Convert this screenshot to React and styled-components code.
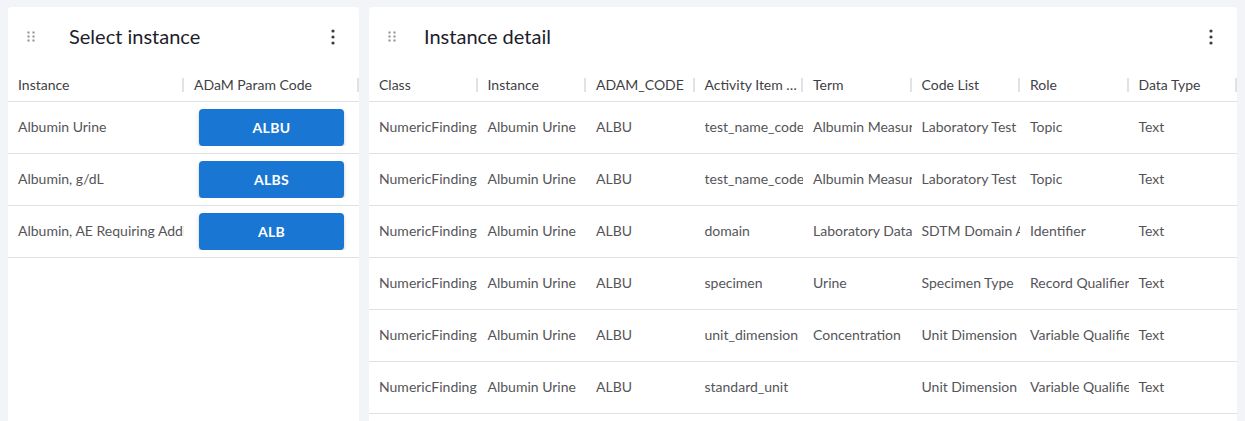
import styled, { createGlobalStyle } from 'styled-components';

const GlobalStyle = createGlobalStyle`
	html, body {
		margin: 0;
		padding: 0;
		background: #f3f4f8;
		font-family: 'Lato', 'Noto Sans', sans-serif;
	}
	* {
		box-sizing: border-box;
	}
`;

const Page = styled.div`
	display: flex;
	gap: 10px;
	padding: 7px 8px 0 8px;
	height: 421px;
	overflow: hidden;
`;

const Card = styled.div`
	flex: ${({ $width }) => ($width ? `0 0 ${$width}px` : '1')};
	display: flex;
	flex-direction: column;
	background: #ffffff;
	border-radius: 4px 4px 0 0;
	min-height: 430px;
`;

const CardHeader = styled.div`
	display: flex;
	align-items: center;
	height: 59px;
	padding: 0 18px 0 19px;
`;

const Handle = styled.div`
	display: flex;
	width: ${({ $gap }) => $gap}px;
	flex-shrink: 0;
`;

const Title = styled.h2`
	flex: 1;
	margin: 0;
	font-size: 20px;
	font-weight: 400;
	color: #1d1d2b;
	padding-bottom: 2px;
`;

const MenuButton = styled.button`
	display: flex;
	align-items: center;
	justify-content: center;
	width: 16px;
	height: 24px;
	padding: 0;
	border: none;
	background: none;
	cursor: pointer;
`;

const Grid = styled.div`
	display: grid;
	grid-template-columns: ${({ $columns }) => $columns};
	border-bottom: 1px solid #e2e2e2;
	height: ${({ $height }) => $height}px;
	padding-top: ${({ $top }) => $top || 0}px;
	align-items: center;
`;

const HeadCell = styled.div`
	position: relative;
	padding: 0 5px 1px 10px;
	font-size: 14px;
	color: #3f3f46;
	white-space: nowrap;
	overflow: hidden;
	text-overflow: ellipsis;

	&::after {
		content: '';
		position: absolute;
		right: 0;
		top: 50%;
		width: 2px;
		height: 14px;
		margin-top: -7px;
		background: #e2e2e2;
	}
`;

const Cell = styled.div`
	display: flex;
	justify-content: ${({ $center }) => ($center ? 'center' : 'flex-start')};
	padding-left: ${({ $center }) => ($center ? '0' : '10px')};
	padding-bottom: ${({ $center }) => ($center ? '0' : '3px')};
	font-size: 14px;
	color: #555559;
	white-space: nowrap;
	overflow: hidden;
`;

const CodeButton = styled.button`
	width: 145px;
	height: 37px;
	border: none;
	border-radius: 4px;
	background: #1976d2;
	color: #ffffff;
	font-family: inherit;
	font-size: 14px;
	font-weight: 700;
	letter-spacing: 0.3px;
	box-shadow: 0 3px 1px -2px rgba(0, 0, 0, 0.2), 0 2px 2px 0 rgba(0, 0, 0, 0.14),
		0 1px 5px 0 rgba(0, 0, 0, 0.12);
	cursor: pointer;
`;

const DragIcon = () => (
	<svg width='9' height='11' viewBox='0 0 9 11'>
		{[1.5, 5.5, 9.5].map((y) =>
			[1.5, 6.5].map((x) => (
				<rect key={`${x}-${y}`} x={x - 1} y={y - 1} width='2' height='2' fill='#8a8d96' />
			))
		)}
	</svg>
);

const KebabIcon = () => (
	<svg width='4' height='16' viewBox='0 0 4 16'>
		{[2, 8, 14].map((y) => (
			<circle key={y} cx='2' cy={y} r='1.6' fill='#3c3c48' />
		))}
	</svg>
);

const instances = [
	{ name: 'Albumin Urine', code: 'ALBU' },
	{ name: 'Albumin, g/dL', code: 'ALBS' },
	{ name: 'Albumin, AE Requiring Additional Data', code: 'ALB' },
];

const detailColumns = [
	'Class',
	'Instance',
	'ADAM_CODE',
	'Activity Item Class',
	'Term',
	'Code List',
	'Role',
	'Data Type',
];

// last four varying columns per row, the rest are the same for Albumin Urine
const detailRows = [
	['test_name_code', 'Albumin Measurement', 'Laboratory Test Code', 'Topic'],
	['test_name_code', 'Albumin Measurement', 'Laboratory Test Name', 'Topic'],
	['domain', 'Laboratory Data', 'SDTM Domain Abbreviation', 'Identifier'],
	['specimen', 'Urine', 'Specimen Type', 'Record Qualifier'],
	['unit_dimension', 'Concentration', 'Unit Dimension', 'Variable Qualifier'],
	['standard_unit', '', 'Unit Dimension', 'Variable Qualifier'],
];

const PanelHeader = ({ title, gap }) => (
	<CardHeader>
		<Handle $gap={gap}>
			<DragIcon />
		</Handle>
		<Title>{title}</Title>
		<MenuButton aria-label='menu'>
			<KebabIcon />
		</MenuButton>
	</CardHeader>
);

const leftCols = '176px 1fr';
const rightCols = 'repeat(8, 1fr)';

const App = () => {
	return (
		<>
			<GlobalStyle />
			<Page>
				<Card $width={351}>
					<PanelHeader title='Select instance' gap={42} />
					<Grid $columns={leftCols} $height={36} $top={2}>
						<HeadCell>Instance</HeadCell>
						<HeadCell>ADaM Param Code</HeadCell>
					</Grid>
					{instances.map((item) => (
						<Grid key={item.code} $columns={leftCols} $height={52}>
							<Cell>{item.name}</Cell>
							<Cell $center>
								<CodeButton>{item.code}</CodeButton>
							</Cell>
						</Grid>
					))}
				</Card>

				<Card>
					<PanelHeader title='Instance detail' gap={36} />
					<Grid $columns={rightCols} $height={36} $top={2}>
						{detailColumns.map((col) => (
							<HeadCell key={col}>{col}</HeadCell>
						))}
					</Grid>
					{detailRows.map((row, i) => (
						<Grid key={i} $columns={rightCols} $height={52}>
							<Cell>NumericFinding</Cell>
							<Cell>Albumin Urine</Cell>
							<Cell>ALBU</Cell>
							{row.map((value, j) => (
								<Cell key={j}>{value}</Cell>
							))}
							<Cell>Text</Cell>
						</Grid>
					))}
				</Card>
			</Page>
		</>
	);
};

export default App;
